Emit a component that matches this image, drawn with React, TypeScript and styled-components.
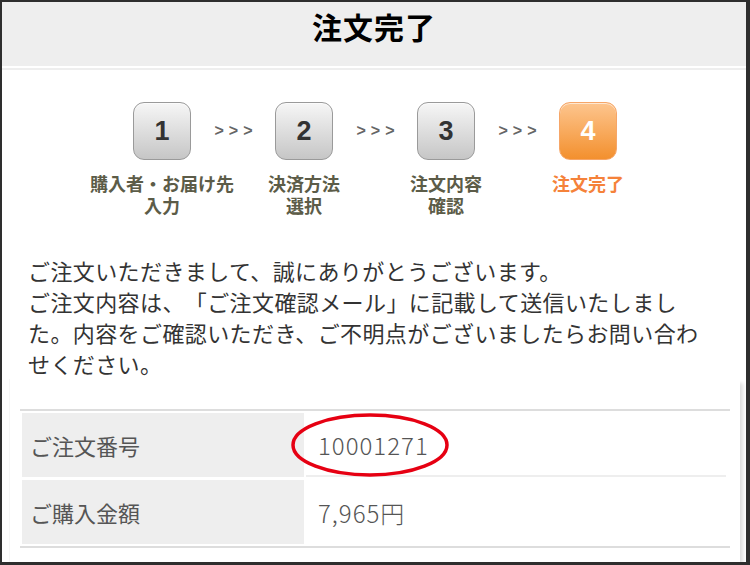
import React from "react";
import styled, { createGlobalStyle } from "styled-components";

const Global = createGlobalStyle`
  html, body { margin: 0; padding: 0; background: #2e2e2e; }
  body { font-family: "Noto Sans CJK JP", "Noto Sans", sans-serif; text-spacing-trim: space-all; }
  * { box-sizing: border-box; }
`;

const Frame = styled.div`
  width: 750px;
  height: 565px;
  overflow: hidden;
  border-style: solid;
  border-color: #2e2e2e;
  border-width: 2px 4px 3px 2px;
  background: #fff;
  display: flex;
  flex-direction: column;
`;

const Header = styled.header`
  height: 64px;
  flex: none;
  background: #eeeeee;
  box-shadow: 0 2px 0 #ffffff, 0 4px 0 #eeeeee;
  display: flex;
  justify-content: center;
  padding-top: 4px;
  position: relative;
  z-index: 1;
`;

const Title = styled.h1`
  margin: 0;
  font-size: 30px;
  line-height: 40px;
  font-weight: 700;
  color: #000;
  letter-spacing: 1px;
`;

const Steps = styled.div`
  display: flex;
  justify-content: center;
  align-items: flex-start;
  padding-top: 36px;
  padding-left: 2px;
`;

const Step = styled.div`
  width: 58px;
  display: flex;
  flex-direction: column;
  align-items: center;
`;

const Box = styled.div<{ $active?: boolean }>`
  width: 58px;
  height: 58px;
  border-radius: 11px;
  display: flex;
  align-items: center;
  justify-content: center;
  font-family: "Liberation Sans", Arial, sans-serif;
  font-weight: 700;
  font-size: 27px;
  color: ${(p) => (p.$active ? "#ffffff" : "#333333")};
  border: 1.5px solid ${(p) => (p.$active ? "#f6a668" : "#9a9a9a")};
  background: ${(p) =>
    p.$active
      ? "linear-gradient(#fdc58e, #f3902e)"
      : "linear-gradient(#f6f6f6, #c6c6c6)"};
  box-shadow: inset 0 1px 0 rgba(255, 255, 255, 0.6);
`;

const Label = styled.div<{ $active?: boolean }>`
  margin-top: 12px;
  white-space: nowrap;
  text-align: center;
  font-size: 18px;
  line-height: 22px;
  font-weight: 700;
  color: ${(p) => (p.$active ? "#f5823a" : "#5c5c48")};
`;

const Arrow = styled.div`
  width: 84px;
  height: 58px;
  display: flex;
  align-items: center;
  justify-content: center;
  font-family: "Liberation Sans", Arial, sans-serif;
  font-weight: 700;
  font-size: 16px;
  letter-spacing: 5px;
  padding-left: 6px;
  color: #666;
`;

const Message = styled.p`
  margin: 39px 0 0;
  padding: 0 40px 0 26px;
  font-size: 22px;
  line-height: 31px;
  letter-spacing: 0.4px;
  color: #333;
`;

const Panel = styled.section`
  flex: 1;
  margin: 0 6px 0 8px;
  padding: 30px 10px 0 10px;
  background: #fff;
  box-shadow: 4px 3px 4px -1px rgba(0, 0, 0, 0.14), -1px 0 0 rgba(0, 0, 0, 0.03);
`;

const Table = styled.div`
  border-top: 2px solid #dddddd;
  border-bottom: 2px solid #dddddd;
  padding: 2px;
  display: grid;
  gap: 3px;
`;

const Row = styled.div`
  display: grid;
  grid-template-columns: 282px 1fr;
  gap: 2px;
  height: 64px;
`;

const Th = styled.div`
  background: #eeeeee;
  display: flex;
  align-items: center;
  padding-left: 8px;
  font-size: 22px;
  color: #555;
`;

const Td = styled.div<{ $ruled?: boolean }>`
  position: relative;
  display: flex;
  align-items: center;
  padding-left: 12px;
  font-size: 24px;
  letter-spacing: 1px;
  color: #555;
  font-weight: 300;
  border-bottom: ${(p) => (p.$ruled ? "2px solid #eeeeee" : "none")};
  margin-right: ${(p) => (p.$ruled ? "2px" : "0")};
`;

const Circle = styled.svg`
  position: absolute;
  left: -16px;
  top: -1px;
  width: 160px;
  height: 66px;
  overflow: visible;
  pointer-events: none;
`;

const steps = [
  { n: "1", label: ["購入者・お届け先", "入力"] },
  { n: "2", label: ["決済方法", "選択"] },
  { n: "3", label: ["注文内容", "確認"] },
  { n: "4", label: ["注文完了"], active: true },
];

export default function App() {
  return (
    <>
      <Global />
      <Frame>
        <Header>
          <Title>注文完了</Title>
        </Header>
        <Steps>
          {steps.map((s, i) => (
            <React.Fragment key={s.n}>
              {i > 0 && <Arrow>&gt;&gt;&gt;</Arrow>}
              <Step>
                <Box $active={s.active}>{s.n}</Box>
                <Label $active={s.active}>
                  {s.label.map((l, j) => (
                    <React.Fragment key={l}>
                      {j > 0 && <br />}
                      {l}
                    </React.Fragment>
                  ))}
                </Label>
              </Step>
            </React.Fragment>
          ))}
        </Steps>
        <Message>
          ご注文いただきまして、誠にありがとうございます。
          <br />
          ご注文内容は、「ご注文確認メール」に記載して送信いたしました。内容をご確認いただき、ご不明点がございましたらお問い合わせください。
        </Message>
        <Panel>
          <Table>
            <Row>
              <Th>ご注文番号</Th>
              <Td $ruled>
                10001271
                <Circle viewBox="0 0 160 66">
                  <ellipse cx="80" cy="33" rx="77" ry="30" fill="none" stroke="#e60012" strokeWidth="3.5" />
                </Circle>
              </Td>
            </Row>
            <Row>
              <Th>ご購入金額</Th>
              <Td>7,965円</Td>
            </Row>
          </Table>
        </Panel>
      </Frame>
    </>
  );
}
